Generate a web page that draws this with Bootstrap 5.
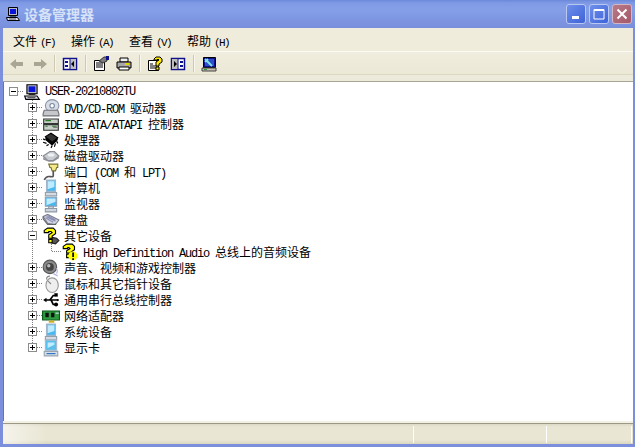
<!DOCTYPE html>
<html lang="zh-CN">
<head>
<meta charset="utf-8">
<title>设备管理器</title>
<link href="https://cdn.jsdelivr.net/npm/bootstrap@5.3.0/dist/css/bootstrap.min.css" rel="stylesheet">
<style>
html,body{height:447px;overflow:hidden;background:#7b8fdd}
body{font-family:"Noto Sans CJK SC",sans-serif;font-size:12px;line-height:16px;color:#000}
.xp-win{height:447px;width:635px;padding:0 2px 3px 3px;background:#7b8fdd}
.xp-title{height:30px;margin:0 -2px 0 -3px;padding:0 3px 0 5px;background:linear-gradient(180deg,#6b88da 0,#7f99e4 3px,#86a0e8 9px,#7c94e0 22px,#768cdb 30px)}
.xp-name{font-weight:700;font-size:14px;color:#d6e2f8;margin-left:3px}
.xp-cap{width:20px;height:20px;border:1px solid #b9c8f0;border-radius:3px;background:linear-gradient(135deg,#6f90ea,#3d62d8);margin-left:3px}
.xp-cap.cl{background:linear-gradient(135deg,#b87a88,#a4596a);border-color:#d5b7c4}
.xp-body{background:#ece9d8}
.xp-menu{height:22px;padding-left:1px;padding-top:1px;background:#efecdb;border-bottom:1px solid #fbfaf3;box-sizing:content-box}
.xp-mi{width:58px;padding-left:9px;white-space:nowrap;height:21px;line-height:21px}
.lat{font-family:"Liberation Mono",monospace;letter-spacing:-1.2px;line-height:1}
.xp-mi .lat{font-size:11px;letter-spacing:-1.6px;margin-left:3px}
.xp-tool{height:23px;padding:1px 0 0 6px;gap:7px;background:linear-gradient(180deg,#f0edde,#ebe8d6);border-bottom:1px solid #dcd8c4}
.xp-tb{width:16px;height:16px;display:block;flex:none}
.xp-div{width:1px;height:17px;background:#cdc9b3;border-right:1px solid #f8f6ec;box-sizing:content-box;margin-right:-1px}
.xp-div.lead{margin-left:-1px}
.xp-band{height:6px;background:#eceadb;border-bottom:1px solid #a8a594;box-sizing:content-box}
.xp-client{height:339px;padding-top:2px;background:#fff;border-left:1px solid #7c7864;box-sizing:border-box;overflow:hidden}
.xp-rim{height:2px;background:#f3f1e4;border-bottom:1px solid #9b9886;box-sizing:content-box}
.xp-status{height:20px;background:linear-gradient(90deg,rgba(255,255,255,.55),rgba(255,255,255,0) 45px),linear-gradient(180deg,#dcd9c6 0,#e9e6d3 3px,#e9e6d3 16px,#dad6c2 100%)}
.xp-sg{border-right:1px solid #fff;height:17px}
.xp-sg1{width:411px}
.xp-sg2{width:133px}
.xp-sg3{width:85px}
.xp-row{height:16px;white-space:nowrap}
.xp-g{width:19px;height:16px;flex:none;display:block}
.xp-ic{width:18px;height:18px;flex:none;display:block;margin:-1px 4px -1px 0}
</style>
</head>
<body>
<svg width="0" height="0" class="d-block" aria-hidden="true"><defs>
<symbol id="pc" viewBox="0 0 16 16">
<path d="M3.500 1.500h9v8h-9z" fill="#b8bcc8" stroke="#000"/><path d="M5 3h6v5H5z" fill="#0a14d8"/><path d="M1.500 11.500h11l2 3h-12z" fill="#dde" stroke="#000"/><path d="M4 13h7" stroke="#555"/><path d="M5 10h6" stroke="#000"/>
</symbol>
<symbol id="dvd" viewBox="0 0 16 16">
<ellipse cx="9" cy="6" rx="6" ry="5.500" fill="#d8dee8" stroke="#8b95a8"/><circle cx="9" cy="6" r="2" fill="#fff" stroke="#7c8aa0"/><path d="M2 10h12l1 3v2H1v-2z" fill="#c5c7cb" stroke="#6f7278"/>
</symbol>
<symbol id="ide" viewBox="0 0 16 16">
<path d="M1.500 3.500h13v4h-13zM1.500 8.500h13v5h-13z" fill="#c8d0c8" stroke="#333"/><path d="M3 5h5M3 10h2M9 10h4" stroke="#2a7a2a"/><path d="M10 11h4" stroke="#777"/>
</symbol>
<symbol id="cpu" viewBox="0 0 16 16">
<path d="M3 5l5-3 6 4-5 4z" fill="#333" stroke="#000"/><path d="M3 5v3l6 5 5-5V6L9 10z" fill="#000"/><path d="M1 7l2 1M1 10l3 1M4 13l2-1M8 15l1-2M11 14l1-3M14 11l-1-2" stroke="#000"/>
</symbol>
<symbol id="disk" viewBox="0 0 16 16">
<path d="M1 8l6-4h4l4 4-5 4H5z" fill="#c8ccd2" stroke="#8a8d94"/><path d="M1 9v2l5 2h4l5-3V8l-5 4H5z" fill="#8d9097"/><ellipse cx="8" cy="7" rx="3" ry="1.500" fill="#eef0f4"/>
</symbol>
<symbol id="port" viewBox="0 0 16 16">
<path d="M6 1h8v3h-1l-1 3h-3l-1-3h-1z" fill="#f3e88a" stroke="#77722f"/><path d="M10 7v4c0 2-2 1-4 1s-3 1-4 3" fill="none" stroke="#555" stroke-width="1.500"/>
</symbol>
<symbol id="comp" viewBox="0 0 16 16">
<path d="M4 1h8v10H4z" fill="#48b8f0" stroke="#9fb6cc"/><path d="M5 2h6v5l-6 2z" fill="#bfeaff"/><path d="M3 12h10v3H3z" fill="#d4dbe3" stroke="#94a0ac"/>
</symbol>
<symbol id="mon" viewBox="0 0 16 16">
<path d="M3 2h10v8H3z" fill="#48b8f0" stroke="#8ea3b8"/><path d="M4 3h8v3l-8 3z" fill="#c4ecff"/><path d="M6 10h4v2H6zM3 12h10v3H3z" fill="#ced5dd" stroke="#8d99a6"/>
</symbol>
<symbol id="kbd" viewBox="0 0 16 16">
<path d="M1 5l4-2 10 5-3 4-7-1z" fill="#d4d6e0" stroke="#7d8090"/><path d="M4 5l8 4M3 6l7 4M5 4l7 4" stroke="#8b8fb8"/><path d="M1 5v2l4 5h7v-1" fill="none" stroke="#666"/>
</symbol>
<symbol id="q" viewBox="0 0 16 16">
<path d="M8 9l5 1 2 2-3 3-4-1z" fill="#555" stroke="#222"/><path d="M2 3l3-2h5l2 2v3l-3 2v2H6V7l3-2-1-1H6v1H2z" fill="#ff0" stroke="#000"/><path d="M6 11h3v3H6z" fill="#ff0" stroke="#000"/>
</symbol>
<symbol id="warn" viewBox="0 0 16 16">
<path d="M2 3l3-2h5l2 2v3l-3 2v1H5V7l3-2-1-1H6v1H2z" fill="#ff0" stroke="#000"/><path d="M5 10h4v3H5z" fill="#ff0" stroke="#000"/><circle cx="10.500" cy="11.500" r="4" fill="#ff0"/><path d="M10 8.500h1.500v4H10zM10 13.500h1.500V15H10z" fill="#000"/>
</symbol>
<symbol id="snd" viewBox="0 0 16 16">
<circle cx="7" cy="7" r="6" fill="#8a8a8a" stroke="#555"/><circle cx="7" cy="7" r="3.500" fill="#444"/><circle cx="6" cy="6" r="1.500" fill="#bbb"/><path d="M10 13l4 2M13 8c1 2 1 3 0 5" stroke="#b5b5e0" fill="none"/>
</symbol>
<symbol id="mouse" viewBox="0 0 16 16">
<ellipse cx="9" cy="9" rx="5.500" ry="6.500" fill="#eee" stroke="#9a9a9a"/><path d="M5 5l3 3M7 1c-2 0-3 1-3 3" stroke="#888" fill="none"/>
</symbol>
<symbol id="usb" viewBox="0 0 16 16">
<path d="M3 8h11M7 8l3-4h2M8 8l2 4h2" stroke="#000" stroke-width="1.500" fill="none"/><path d="M1 8l3-2v4z" fill="#000"/><path d="M11 2h3v3h-3z" fill="#000"/><circle cx="12.500" cy="12" r="1.800" fill="#000"/><circle cx="14" cy="8" r="1" fill="#000"/>
</symbol>
<symbol id="net" viewBox="0 0 16 16">
<path d="M0.500 3.500h15v8h-15z" fill="#2d9b3f" stroke="#0c5a1a"/><path d="M3 5h3v4H3zM8 5h3v4H8z" fill="#111"/><path d="M6 12h5v2H6z" fill="#d0b020"/><path d="M12 5h3v1h-3z" fill="#cde"/>
</symbol>
<symbol id="disp" viewBox="0 0 16 16">
<path d="M3 1h10v9H3z" fill="#5ac0ee" stroke="#a8bccc"/><path d="M5 3h6v2l-6 3z" fill="#c4ecff"/><path d="M2 11h12v4H2z" fill="#d9dfe6" stroke="#98a4b0"/><path d="M4 13h8" stroke="#1f6fc8"/>
</symbol>
<symbol id="minus" viewBox="0 0 19 16"><path d="M9.500 0v3M9.500 12v4" stroke="#808080" stroke-dasharray="1 1"/><rect x="5.500" y="3.500" width="8" height="8" fill="#fff" stroke="#8c8c8c"/><path d="M7 7.500h5" stroke="#000"/></symbol>
<symbol id="plus" viewBox="0 0 19 16"><path d="M9.500 0v3M9.500 12v4" stroke="#808080" stroke-dasharray="1 1"/><rect x="5.500" y="3.500" width="8" height="8" fill="#fff" stroke="#8c8c8c"/><path d="M7 7.500h5M9.500 5v5" stroke="#000"/><path d="M14 7.500h5" stroke="#808080" stroke-dasharray="1 1"/></symbol>
<symbol id="plusend" viewBox="0 0 19 16"><path d="M9.500 0v3" stroke="#808080" stroke-dasharray="1 1"/><rect x="5.500" y="3.500" width="8" height="8" fill="#fff" stroke="#8c8c8c"/><path d="M7 7.500h5M9.500 5v5" stroke="#000"/><path d="M14 7.500h5" stroke="#808080" stroke-dasharray="1 1"/></symbol>
<symbol id="vline" viewBox="0 0 19 16"><path d="M9.500 0v16" stroke="#808080" stroke-dasharray="1 1"/></symbol>
<symbol id="lend" viewBox="0 0 19 16"><path d="M9.500 0v7.500H19" stroke="#808080" stroke-dasharray="1 1" fill="none"/></symbol>
<symbol id="rootm" viewBox="0 0 19 16"><rect x="5.500" y="3.500" width="8" height="8" fill="#fff" stroke="#8c8c8c"/><path d="M7 7.500h5" stroke="#000"/><path d="M14 7.500h5" stroke="#808080" stroke-dasharray="1 1"/></symbol>
</defs></svg>

<div class="xp-win d-flex flex-column">
  <div class="xp-title d-flex align-items-center">
    <svg class="xp-tb" viewBox="0 0 16 16"><use href="#pc"/></svg>
    <span class="xp-name flex-grow-1">设备管理器</span>
    <div class="xp-cap d-flex align-items-end justify-content-center pb-1"><svg width="8" height="3" class="d-block"><rect width="7" height="3" fill="#fff"/></svg></div>
    <div class="xp-cap d-flex align-items-center justify-content-center"><svg width="12" height="12" class="d-block"><path d="M1 1.500h10v9.500H1z" fill="none" stroke="#fff"/><path d="M1 2h10" stroke="#fff" stroke-width="2"/></svg></div>
    <div class="xp-cap cl d-flex align-items-center justify-content-center"><svg width="12" height="12" class="d-block"><path d="M1.500 1.500l9 9M10.500 1.500l-9 9" stroke="#fff" stroke-width="2"/></svg></div>
  </div>
  <div class="xp-body d-flex flex-column flex-grow-1">
    <div class="xp-menu d-flex align-items-center">
      <div class="xp-mi">文件<span class="lat">(F)</span></div>
      <div class="xp-mi">操作<span class="lat">(A)</span></div>
      <div class="xp-mi">查看<span class="lat">(V)</span></div>
      <div class="xp-mi">帮助<span class="lat">(H)</span></div>
    </div>
    <div class="xp-tool d-flex align-items-center">
      <svg class="xp-tb" viewBox="0 0 16 16"><path d="M1 8l6-5v3h7v4H7v3z" fill="#a9a793"/></svg>
      <svg class="xp-tb" viewBox="0 0 16 16"><path d="M15 8l-6-5v3H2v4h7v3z" fill="#a9a793"/></svg>
      <div class="xp-div lead"></div>
      <svg class="xp-tb" viewBox="0 0 16 16"><path d="M1.500 2.500h13v11h-13z" fill="#fff" stroke="#10108a" stroke-width="1.500"/><path d="M8 3h6v10H8z" fill="#bcbcbc"/><path d="M8 3v10" stroke="#10108a"/><path d="M3 5h3v2H3zM3 9h3v2H3z" fill="#10108a"/><path d="M12 5v6L9 8z" fill="#000"/></svg>
      <div class="xp-div"></div>
      <svg class="xp-tb" viewBox="0 0 16 16"><path d="M1.500 4.500h10v10h-10z" fill="#fff" stroke="#000"/><path d="M3 7h7M3 9h7M3 11h7" stroke="#000"/><path d="M6 5l5-4h3v4l-4 2z" fill="#7b7b7b" stroke="#333"/><path d="M13 0h3v4h-3z" fill="#10108a"/></svg>
      <svg class="xp-tb" viewBox="0 0 16 16"><path d="M4 2h8v4H4z" fill="#f2f2f2" stroke="#000"/><path d="M1 6h14v6H1z" fill="#a8a8a8" stroke="#000"/><path d="M3 11h10v3H3z" fill="#fff" stroke="#000"/><path d="M9 8h4" stroke="#e6d200" stroke-width="2"/></svg>
      <div class="xp-div"></div>
      <svg class="xp-tb" viewBox="0 0 16 16"><path d="M1.500 4.500h10v10h-10z" fill="#fff" stroke="#000"/><path d="M3 8h3M3 10h7M3 12h7" stroke="#000"/><path d="M7 3l2-2h4l2 2v3l-3 2v2H9V6l3-2-1-1-1 1H7zM9 11h3v3H9z" fill="#ffe800" stroke="#000"/></svg>
      <svg class="xp-tb" viewBox="0 0 16 16"><path d="M1.500 2.500h13v11h-13z" fill="#fff" stroke="#10108a" stroke-width="1.500"/><path d="M2 3h6v10H2z" fill="#bcbcbc"/><path d="M8 3v10" stroke="#10108a"/><path d="M10 5h3v2h-3zM10 9h3v2h-3z" fill="#10108a"/><path d="M4 5v6l3-3z" fill="#000"/></svg>
      <div class="xp-div"></div>
      <svg class="xp-tb" viewBox="0 0 16 16"><path d="M2.500 1.500h12v10h-12z" fill="#10108a" stroke="#000"/><path d="M4 3h9v7H4z" fill="#2c50c8"/><path d="M4 3l7 7" stroke="#7fe0e8" stroke-width="2"/><path d="M4 6l3-3" stroke="#7fe0e8" stroke-width="2"/><path d="M1 12h14v3H1z" fill="#c6c2ae" stroke="#444"/><path d="M3 13.500h3" stroke="#2f9a3f"/></svg>
    </div>
    <div class="xp-band"></div>
    <div class="xp-client">
      <div class="xp-row d-flex align-items-center"><svg class="xp-g"><use href="#rootm"/></svg><svg class="xp-ic" viewBox="0 0 16 16"><use href="#pc"/></svg><span class="lat">USER-20210802TU</span></div>
      <div class="xp-row d-flex align-items-center"><svg class="xp-g"></svg><svg class="xp-g"><use href="#plus"/></svg><svg class="xp-ic" viewBox="0 0 16 16"><use href="#dvd"/></svg><span><span class="lat">DVD/CD-ROM </span>驱动器</span></div>
      <div class="xp-row d-flex align-items-center"><svg class="xp-g"></svg><svg class="xp-g"><use href="#plus"/></svg><svg class="xp-ic" viewBox="0 0 16 16"><use href="#ide"/></svg><span><span class="lat">IDE ATA/ATAPI </span>控制器</span></div>
      <div class="xp-row d-flex align-items-center"><svg class="xp-g"></svg><svg class="xp-g"><use href="#plus"/></svg><svg class="xp-ic" viewBox="0 0 16 16"><use href="#cpu"/></svg><span>处理器</span></div>
      <div class="xp-row d-flex align-items-center"><svg class="xp-g"></svg><svg class="xp-g"><use href="#plus"/></svg><svg class="xp-ic" viewBox="0 0 16 16"><use href="#disk"/></svg><span>磁盘驱动器</span></div>
      <div class="xp-row d-flex align-items-center"><svg class="xp-g"></svg><svg class="xp-g"><use href="#plus"/></svg><svg class="xp-ic" viewBox="0 0 16 16"><use href="#port"/></svg><span>端口<span class="lat"> (COM </span>和<span class="lat"> LPT)</span></span></div>
      <div class="xp-row d-flex align-items-center"><svg class="xp-g"></svg><svg class="xp-g"><use href="#plus"/></svg><svg class="xp-ic" viewBox="0 0 16 16"><use href="#comp"/></svg><span>计算机</span></div>
      <div class="xp-row d-flex align-items-center"><svg class="xp-g"></svg><svg class="xp-g"><use href="#plus"/></svg><svg class="xp-ic" viewBox="0 0 16 16"><use href="#mon"/></svg><span>监视器</span></div>
      <div class="xp-row d-flex align-items-center"><svg class="xp-g"></svg><svg class="xp-g"><use href="#plus"/></svg><svg class="xp-ic" viewBox="0 0 16 16"><use href="#kbd"/></svg><span>键盘</span></div>
      <div class="xp-row d-flex align-items-center"><svg class="xp-g"></svg><svg class="xp-g"><use href="#minus"/></svg><svg class="xp-ic" viewBox="0 0 16 16"><use href="#q"/></svg><span>其它设备</span></div>
      <div class="xp-row d-flex align-items-center"><svg class="xp-g"></svg><svg class="xp-g"><use href="#vline"/></svg><svg class="xp-g"><use href="#lend"/></svg><svg class="xp-ic" viewBox="0 0 16 16"><use href="#warn"/></svg><span><span class="lat">High Definition Audio </span>总线上的音频设备</span></div>
      <div class="xp-row d-flex align-items-center"><svg class="xp-g"></svg><svg class="xp-g"><use href="#plus"/></svg><svg class="xp-ic" viewBox="0 0 16 16"><use href="#snd"/></svg><span>声音、视频和游戏控制器</span></div>
      <div class="xp-row d-flex align-items-center"><svg class="xp-g"></svg><svg class="xp-g"><use href="#plus"/></svg><svg class="xp-ic" viewBox="0 0 16 16"><use href="#mouse"/></svg><span>鼠标和其它指针设备</span></div>
      <div class="xp-row d-flex align-items-center"><svg class="xp-g"></svg><svg class="xp-g"><use href="#plus"/></svg><svg class="xp-ic" viewBox="0 0 16 16"><use href="#usb"/></svg><span>通用串行总线控制器</span></div>
      <div class="xp-row d-flex align-items-center"><svg class="xp-g"></svg><svg class="xp-g"><use href="#plus"/></svg><svg class="xp-ic" viewBox="0 0 16 16"><use href="#net"/></svg><span>网络适配器</span></div>
      <div class="xp-row d-flex align-items-center"><svg class="xp-g"></svg><svg class="xp-g"><use href="#plus"/></svg><svg class="xp-ic" viewBox="0 0 16 16"><use href="#comp"/></svg><span>系统设备</span></div>
      <div class="xp-row d-flex align-items-center"><svg class="xp-g"></svg><svg class="xp-g"><use href="#plusend"/></svg><svg class="xp-ic" viewBox="0 0 16 16"><use href="#disp"/></svg><span>显示卡</span></div>
    </div>
    <div class="xp-rim"></div>
    <div class="xp-status d-flex align-items-center">
      <div class="xp-sg xp-sg1"></div>
      <div class="xp-sg xp-sg2"></div>
      <div class="xp-sg xp-sg3"></div>
    </div>
  </div>
</div>
</body>
</html>
